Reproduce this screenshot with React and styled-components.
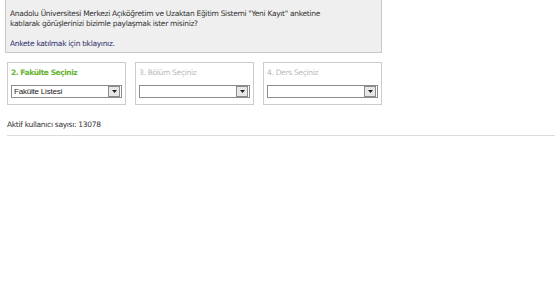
import React from "react";
import styled, { createGlobalStyle } from "styled-components";

const Global = createGlobalStyle`
    body {
        margin: 0;
        background: #ffffff;
        font-family: "DejaVu Sans", Verdana, sans-serif;
        font-size: 7.5px;
        color: #333333;
    }
`;

const Page = styled.div`
    width: 555px;
    height: 300px;
    padding: 0 0 0 5px;
    box-sizing: border-box;
    overflow: hidden;
`;

const Notice = styled.div`
    width: 377px;
    margin-top: -6px;
    padding: 14px 0 3px 4px;
    box-sizing: border-box;
    background: #efefef;
    border: 1px solid #c8c8c8;
    line-height: 10px;
    letter-spacing: -0.3px;
`;

const Line = styled.p`
    margin: 0;
`;

const LinkLine = styled.p`
    margin: 10px 0 0;
    color: #2e2e6e;
`;

const Steps = styled.div`
    display: flex;
    gap: 9px;
    margin: 9px 0 0 2px;
`;

const Step = styled.div`
    width: 119px;
    height: 43px;
    box-sizing: border-box;
    border: 1px solid #cccccc;
    padding: 5px 3px 0;
    display: flex;
    flex-direction: column;
`;

const StepTitle = styled.div`
    font-weight: ${(p) => (p.$active ? "bold" : "normal")};
    color: ${(p) => (p.$active ? "#66b32e" : "#b8b8b8")};
    height: 10px;
    line-height: 10px;
    letter-spacing: ${(p) => (p.$active ? "-0.45px" : "-0.3px")};
`;

const Select = styled.div`
    margin-top: 7px;
    height: 13px;
    box-sizing: border-box;
    border: 1px solid #8c8c8c;
    background: #ffffff;
    display: flex;
    align-items: center;
    justify-content: space-between;
    font-family: "Liberation Sans", Arial, sans-serif;
    font-size: 8px;
    letter-spacing: -0.2px;
    color: #222222;
    padding-left: 2px;
`;

const Arrow = styled.span`
    width: 10px;
    height: 9px;
    margin-right: 1px;
    border: 1px solid #8c8c8c;
    background: #e8e8e8;
    display: flex;
    align-items: center;
    justify-content: center;
`;

const Counter = styled.div`
    margin: 15px 0 0 2px;
    padding-bottom: 5px;
    border-bottom: 1px solid #dddddd;
    line-height: 10px;
    letter-spacing: -0.3px;
`;

const steps = [
    { title: "2. Fakülte Seçiniz", value: "Fakülte Listesi", active: true },
    { title: "3. Bölüm Seçiniz", value: "" },
    { title: "4. Ders Seçiniz", value: "" },
];

function App() {
    return (
        <Page>
            <Global />
            <Notice>
                <Line>
                    Anadolu Üniversitesi Merkezi Açıköğretim ve Uzaktan Eğitim
                    Sistemi "Yeni Kayıt" anketine
                </Line>
                <Line>katılarak görüşlerinizi bizimle paylaşmak ister misiniz?</Line>
                <LinkLine>Ankete katılmak için tıklayınız.</LinkLine>
            </Notice>
            <Steps>
                {steps.map((s, i) => (
                    <Step key={i}>
                        <StepTitle $active={s.active}>{s.title}</StepTitle>
                        <Select>
                            <span>{s.value}</span>
                            <Arrow>
                                <svg width="5" height="3" viewBox="0 0 5 3">
                                    <path d="M0 0h5L2.5 3z" fill="#222" />
                                </svg>
                            </Arrow>
                        </Select>
                    </Step>
                ))}
            </Steps>
            <Counter>Aktif kullanıcı sayısı: 13078</Counter>
        </Page>
    );
}

export default App;
